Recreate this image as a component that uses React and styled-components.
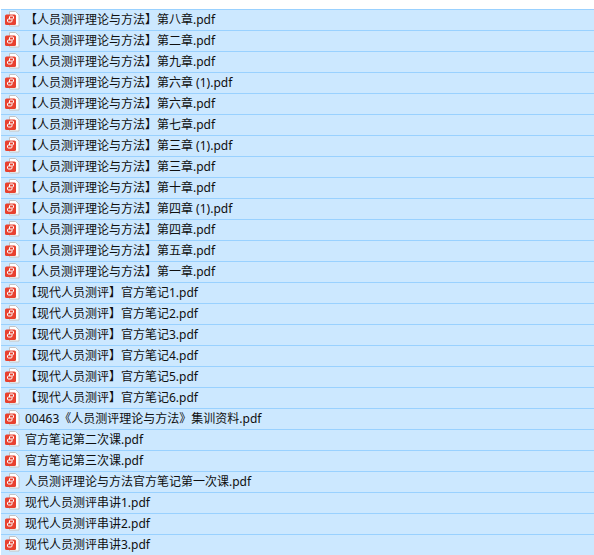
import styled, { createGlobalStyle } from "styled-components";

const files = [
    "【人员测评理论与方法】第八章.pdf",
    "【人员测评理论与方法】第二章.pdf",
    "【人员测评理论与方法】第九章.pdf",
    "【人员测评理论与方法】第六章 (1).pdf",
    "【人员测评理论与方法】第六章.pdf",
    "【人员测评理论与方法】第七章.pdf",
    "【人员测评理论与方法】第三章 (1).pdf",
    "【人员测评理论与方法】第三章.pdf",
    "【人员测评理论与方法】第十章.pdf",
    "【人员测评理论与方法】第四章 (1).pdf",
    "【人员测评理论与方法】第四章.pdf",
    "【人员测评理论与方法】第五章.pdf",
    "【人员测评理论与方法】第一章.pdf",
    "【现代人员测评】官方笔记1.pdf",
    "【现代人员测评】官方笔记2.pdf",
    "【现代人员测评】官方笔记3.pdf",
    "【现代人员测评】官方笔记4.pdf",
    "【现代人员测评】官方笔记5.pdf",
    "【现代人员测评】官方笔记6.pdf",
    "00463《人员测评理论与方法》集训资料.pdf",
    "官方笔记第二次课.pdf",
    "官方笔记第三次课.pdf",
    "人员测评理论与方法官方笔记第一次课.pdf",
    "现代人员测评串讲1.pdf",
    "现代人员测评串讲2.pdf",
    "现代人员测评串讲3.pdf"
];

const GlobalStyle = createGlobalStyle`
    html, body {
        margin: 0;
        padding: 0;
        background: #fff;
        overflow: hidden;
    }
`;

const FileList = styled.div`
    padding: 9px 0 0 1px;
    font-family: "Noto Sans", "Noto Sans CJK SC", sans-serif;
    font-size: 12px;
    color: #0f0f0f;
`;

const FileRow = styled.div`
    display: flex;
    align-items: center;
    height: 21px;
    box-sizing: border-box;
    border-top: 1px solid #99d1ff;
    background: #cce8ff;
    padding-left: 3px;
`;

const FileName = styled.span`
    margin-left: 5px;
    line-height: 18px;
    white-space: pre;
`;

const IconBox = styled.svg`
    flex-shrink: 0;
    margin-bottom: 2px;
`;

function PdfIcon() {
    return (
        <IconBox width="16" height="16" viewBox="0 0 16 16">
            <path d="M5.500 .5h6l3.500 3.500v11h-9.500z" fill="#fff" stroke="#c4c4c4" />
            <rect x="1" y="3.500" width="11" height="10.500" rx="1.500" fill="#e8412f" />
            <path
                d="M5.500 8V6a1 1 0 0 1 1-1H8.500a1 1 0 0 1 1 1v1a1 1 0 0 1-1 1H4.500a1 1 0 0 0-1 1v1a1 1 0 0 0 1 1H7a1 1 0 0 0 1-1V8.500"
                fill="none"
                stroke="#fff"
            />
        </IconBox>
    );
}

export default function App() {
    return (
        <>
            <GlobalStyle />
            <FileList>
                {files.map((name, i) => (
                    <FileRow key={i}>
                        <PdfIcon />
                        <FileName>{name}</FileName>
                    </FileRow>
                ))}
            </FileList>
        </>
    );
}
